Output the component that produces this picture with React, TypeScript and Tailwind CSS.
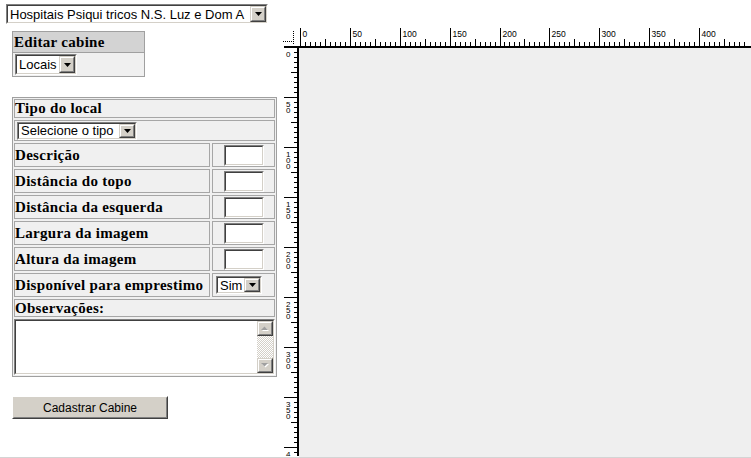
import React from "react";

function ArrowBtn() {
  return (
    <div className="w-[16px] shrink-0 border border-t-[#d4d0c8] border-l-[#d4d0c8] border-b-[#404040] border-r-[#404040]">
      <div className="w-full h-full border border-t-white border-l-white border-b-[#808080] border-r-[#808080] bg-[#d4d0c8] flex items-center justify-center">
        <svg width="7" height="4" viewBox="0 0 7 4">
          <path d="M0 0h7L3.5 4z" fill="#000" />
        </svg>
      </div>
    </div>
  );
}

function Sel({ text, cls }: { text: string; cls: string }) {
  return (
    <div className={`flex shrink-0 border border-t-[#808080] border-l-[#808080] border-b-white border-r-white ${cls}`}>
      <div className="flex flex-1 min-w-0 border border-t-[#404040] border-l-[#404040] border-b-[#d4d0c8] border-r-[#d4d0c8] bg-white">
        <div className="flex-1 min-w-0 pl-[2px] flex items-center whitespace-nowrap overflow-hidden text-[13px] leading-none font-['Liberation_Sans',Arial,sans-serif] text-black">
          {text}
        </div>
        <ArrowBtn />
      </div>
    </div>
  );
}

function TextInput() {
  return (
    <div className="w-[40px] h-[21px] border border-t-[#808080] border-l-[#808080] border-b-white border-r-white">
      <div className="w-full h-full border border-t-[#404040] border-l-[#404040] border-b-[#d4d0c8] border-r-[#d4d0c8] bg-white" />
    </div>
  );
}

const cell = "border border-[#a6a6a6]";

function LabelRow({ label, children, sel }: { label: string; children: React.ReactNode; sel?: boolean }) {
  return (
    <div className="flex h-[24px] gap-[2px]">
      <div className={`${cell} w-[196px] flex items-center pl-[0px] font-bold text-[15px] tracking-[0.3px] whitespace-nowrap`}>
        {label}
      </div>
      <div className={`${cell} flex-1 flex items-center ${sel ? "justify-start pl-[3px]" : "justify-center"}`}>{children}</div>
    </div>
  );
}

function ScrollBtn({ up }: { up: boolean }) {
  return (
    <div className="h-[15px] shrink-0 border border-t-[#d4d0c8] border-l-[#d4d0c8] border-b-[#404040] border-r-[#404040]">
      <div className="w-full h-full border border-t-white border-l-white border-b-[#808080] border-r-[#808080] bg-[#d4d0c8] flex items-center justify-center">
        <svg width="8" height="5" viewBox="0 0 8 5">
          {up ? (
            <>
              <path d="M1 5h7L4.5 1.5z" fill="#fff" />
              <path d="M0 4h7L3.5 0.5z" fill="#a0a0a0" />
            </>
          ) : (
            <>
              <path d="M1 1h7L4.5 4.5z" fill="#fff" />
              <path d="M0 0h7L3.5 3.5z" fill="#a0a0a0" />
            </>
          )}
        </svg>
      </div>
    </div>
  );
}

function TopRuler() {
  const items: React.ReactNode[] = [];
  for (let u = 0; u <= 445; u += 5) {
    const x = 1 + Math.round(u * 0.9975) + 0.5;
    if (u % 50 === 0) {
      items.push(<line key={"l" + u} x1={x} x2={x} y1={1} y2={19} stroke="#000" strokeWidth={1} />);
      if (u <= 400)
        items.push(
          <text key={"t" + u} x={x + 2} y={9.5} fontSize={8.5} fontFamily="Liberation Sans, Arial, sans-serif" fill="#000">
            {u}
          </text>
        );
    } else if (u % 50 === 25) {
      items.push(<line key={"l" + u} x1={x} x2={x} y1={12} y2={19} stroke="#000" strokeWidth={1} />);
    } else {
      items.push(<line key={"l" + u} x1={x} x2={x} y1={15} y2={19} stroke="#000" strokeWidth={1} />);
    }
  }
  return (
    <svg width="452" height="21" className="block">
      {items}
      <rect x={0} y={19} width={452} height={2} fill="#000" />
    </svg>
  );
}

function LeftRuler() {
  const items: React.ReactNode[] = [];
  for (let v = 0; v <= 410; v += 5) {
    const y = v - 1 + 0.5;
    if (v % 50 === 0) {
      if (v > 0) items.push(<line key={"l" + v} x1={2} x2={17} y1={y} y2={y} stroke="#000" strokeWidth={1} />);
      const digits = String(v).split("");
      digits.forEach((d, i) => {
        items.push(
          <text
            key={"t" + v + "-" + i}
            x={4}
            y={y + 9.5 + i * 6}
            fontSize={8}
            fontFamily="Liberation Sans, Arial, sans-serif"
            fill="#000"
          >
            {d}
          </text>
        );
      });
    } else if (v % 50 === 25) {
      items.push(<line key={"l" + v} x1={9} x2={17} y1={y} y2={y} stroke="#000" strokeWidth={1} />);
    } else {
      items.push(<line key={"l" + v} x1={12} x2={17} y1={y} y2={y} stroke="#000" strokeWidth={1} />);
    }
  }
  return (
    <svg width="17" height="408" className="block">
      {items}
      <rect x={15} y={0} width={2} height={408} fill="#000" />
    </svg>
  );
}

function Corner() {
  return (
    <svg width="17" height="21" className="block">
      <line x1={1} x2={11} y1={14.5} y2={14.5} stroke="#000" strokeWidth={1} strokeDasharray="1 1" />
      <line x1={11.5} x2={11.5} y1={4} y2={17} stroke="#000" strokeWidth={1} strokeDasharray="1 1" />
      <rect x={2} y={19} width={15} height={2} fill="#000" />
    </svg>
  );
}

export default function App() {
  return (
    <div className="w-[751px] h-[458px] bg-white overflow-hidden flex flex-col font-['Liberation_Serif',serif] text-black">
      <div className="h-[27px] shrink-0 pt-[4px] pl-[6px]">
        <Sel text="Hospitais Psiqui tricos N.S. Luz e Dom A" cls="w-[262px] h-[20px]" />
      </div>
      <div className="flex h-[430px] shrink-0">
        <div className="w-[282px] shrink-0 pl-[12px] pt-[4px] flex flex-col">
          <div className="w-[133px] h-[46px] border border-[#a0a0a0] bg-[#f0f0f0] flex flex-col">
            <div className="h-[21px] bg-[#d3d3d3] border-b border-[#a0a0a0] pl-[1px] flex items-center font-bold text-[15px] tracking-[0.3px]">
              Editar cabine
            </div>
            <div className="flex-1 flex items-center pl-[2px]">
              <Sel text="Locais" cls="w-[62px] h-[21px]" />
            </div>
          </div>

          <div className="mt-[20px] w-[265px] h-[280px] border border-[#a0a0a0] bg-[#f0f0f0] p-[1px] flex flex-col gap-[2px]">
            <div className={`${cell} h-[19px] flex items-center font-bold text-[15px] tracking-[0.3px]`}>Tipo do local</div>
            <div className={`${cell} h-[21px] flex items-center pl-[2px]`}>
              <Sel text="Selecione o tipo" cls="w-[120px] h-[18px]" />
            </div>
            <LabelRow label="Descrição"><TextInput /></LabelRow>
            <LabelRow label="Distância do topo"><TextInput /></LabelRow>
            <LabelRow label="Distância da esquerda"><TextInput /></LabelRow>
            <LabelRow label="Largura da imagem"><TextInput /></LabelRow>
            <LabelRow label="Altura da imagem"><TextInput /></LabelRow>
            <LabelRow label="Disponível para emprestimo" sel>
              <Sel text="Sim" cls="w-[46px] h-[18px]" />
            </LabelRow>
            <div className={`${cell} h-[18px] flex items-center font-bold text-[15px] tracking-[0.3px]`}>Observações:</div>
            <div className="h-[56px] border border-t-[#808080] border-l-[#808080] border-b-white border-r-white">
              <div className="w-full h-full flex border border-t-[#404040] border-l-[#404040] border-b-[#d4d0c8] border-r-[#d4d0c8] bg-white">
                <div className="flex-1" />
                <div className="w-[16px] flex flex-col bg-[repeating-conic-gradient(#d4d0c8_0%_25%,#ffffff_0%_50%)] bg-[length:2px_2px]">
                  <ScrollBtn up />
                  <div className="flex-1" />
                  <ScrollBtn up={false} />
                </div>
              </div>
            </div>
          </div>

          <button className="mt-[19px] w-[156px] h-[23px] border border-t-white border-l-white border-b-[#404040] border-r-[#404040] bg-[#d4d0c8] p-0">
            <div className="w-full h-full border border-t-[#d4d0c8] border-l-[#d4d0c8] border-b-[#808080] border-r-[#808080] flex items-center justify-center text-[12px] font-['Liberation_Sans',Arial,sans-serif] text-black">
              Cadastrar Cabine
            </div>
          </button>
        </div>

        <div className="flex-1 grid grid-cols-[17px_1fr] grid-rows-[21px_1fr]">
          <Corner />
          <div className="overflow-hidden">
            <TopRuler />
          </div>
          <div className="overflow-hidden">
            <LeftRuler />
          </div>
          <div className="bg-[#efefef]" />
        </div>
      </div>
      <div className="h-[1px] bg-[#d4d4d4]" />
    </div>
  );
}
